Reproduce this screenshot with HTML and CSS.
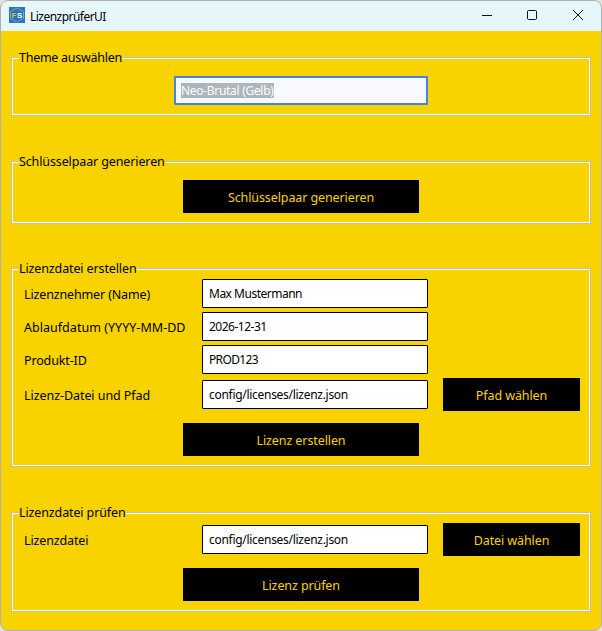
FILE: index.html
```html
<!DOCTYPE html>
<html lang="de">
<head>
<meta charset="utf-8">
<title>LizenzprüferUI</title>
<link rel="stylesheet" href="styles.css">
</head>
<body>
<div class="window">
  <header class="titlebar">
    <svg class="app-icon" width="16" height="16" viewBox="0 0 16 16">
      <rect width="16" height="16" fill="#2f74b5"/>
      <path d="M8 1 14.500 4.500V11.500L8 15 1.500 11.500V4.500Z" fill="none" stroke="#82afd6" stroke-width=".8"/>
      <text x="2.500" y="11" class="icon-f">F</text>
      <text x="8" y="11" class="icon-s">S</text>
    </svg>
    <span class="title">LizenzprüferUI</span>
    <svg class="caption" width="102" height="12" viewBox="0 0 102 12" fill="none" stroke="#111">
      <path d="M0 5.500H10"/>
      <rect x="45.500" y="0.500" width="9" height="9" rx="1"/>
      <path d="M91 0 101 10M101 0 91 10"/>
    </svg>
  </header>
  <main class="content">
    <section class="group theme">
      <h2 class="legend">Theme auswählen</h2>
      <div class="combo"><span class="selection">Neo-Brutal (Gelb)</span></div>
    </section>
    <section class="group keys">
      <h2 class="legend">Schlüsselpaar generieren</h2>
      <button class="btn main-btn">Schlüsselpaar generieren</button>
    </section>
    <section class="group create">
      <h2 class="legend">Lizenzdatei erstellen</h2>
      <div class="row"><label class="label">Lizenznehmer (Name)</label><div class="field name">Max Mustermann</div></div>
      <div class="row"><label class="label wide">Ablaufdatum (YYYY-MM-DD</label><div class="field name">2026-12-31</div></div>
      <div class="row"><label class="label">Produkt-ID</label><div class="field code">PROD123</div></div>
      <div class="row with-btn"><label class="label path">Lizenz-Datei und Pfad</label><div class="field">config/licenses/lizenz.json</div><button class="btn side-btn">Pfad wählen</button></div>
      <button class="btn main-btn">Lizenz erstellen</button>
    </section>
    <section class="group check">
      <h2 class="legend">Lizenzdatei prüfen</h2>
      <div class="row with-btn"><label class="label">Lizenzdatei</label><div class="field">config/licenses/lizenz.json</div><button class="btn side-btn">Datei wählen</button></div>
      <button class="btn main-btn">Lizenz prüfen</button>
    </section>
  </main>
</div>
</body>
</html>
```
FILE: styles.css
```css
* { box-sizing: border-box; }
body {
  margin: 0;
  background: #e4e4e2;
  font-family: "Noto Sans", sans-serif;
  font-size: 12.500px;
  color: #000;
}
.window {
  width: 602px;
  height: 631px;
  border: 1px solid #b0b0b0;
  border-radius: 8px;
  background: #f9d300;
  overflow: hidden;
}
.titlebar {
  display: flex;
  align-items: center;
  height: 30px;
  padding: 0 17px 0 8px;
  background: #e5f7fa;
}
.app-icon { margin-top: -2px; }
.title { margin-left: 5px; font-size: 12px; letter-spacing: -.53px; }
.caption { margin-left: auto; }
.icon-f, .icon-s { font: bold 8px "Liberation Sans", sans-serif; }
.icon-f { fill: #d9b84c; }
.icon-s { fill: #fff; }
.content { padding: 26px 10px 0; }
.group {
  border: 1px solid #bebebe;
  box-shadow: inset 0 0 0 1px #fff;
  display: flex;
  flex-direction: column;
  align-items: flex-start;
}
.theme { height: 59px; margin-bottom: 45px; }
.keys { height: 63px; margin-bottom: 44px; }
.create { height: 199px; margin-bottom: 45px; }
.check { height: 100px; }
.legend {
  margin: -10px 0 0 7px;
  height: 20px;
  line-height: 20px;
  font-size: 12.500px;
  font-weight: 400;
  letter-spacing: -.12px;
  background: #f9d300;
  white-space: nowrap;
}
.theme .legend { letter-spacing: -.27px; }
.combo {
  width: 254px;
  height: 29px;
  margin: 8px 0 0 162px;
  padding: 5px;
  border: 2px solid #4583ec;
  border-radius: 1px;
  background: #f8f9fc;
  font-size: 12px;
  line-height: 15px;
  letter-spacing: -.3px;
}
.selection { display: inline-block; height: 15px; background: #adb5bd; color: #fff; }
.row { display: flex; align-items: center; height: 29px; margin: 0 0 4px 12px; }
.with-btn { height: 33px; margin: 0 0 12px 12px; }
.create .with-btn { margin-top: 0; }
.label {
  width: 162px;
  margin-right: 16px;
  padding-top: 2px;
  line-height: 20px;
  letter-spacing: -.14px;
  overflow: hidden;
  white-space: nowrap;
}
.wide { letter-spacing: .03px; }
.path { letter-spacing: -.06px; }
.field {
  width: 226px;
  height: 29px;
  padding-left: 6px;
  border: 1px solid #000;
  border-radius: 1px;
  background: #fff;
  font-size: 12px;
  line-height: 27px;
  letter-spacing: -.29px;
  white-space: nowrap;
}
.name { letter-spacing: -.5px; }
.code { letter-spacing: -.65px; }
.btn {
  height: 33px;
  padding: 2px 0 0;
  border: 0;
  background: #000;
  color: #f9d300;
  font: 12.500px/31px "Noto Sans", sans-serif;
  letter-spacing: -.1px;
}
.main-btn { width: 236px; margin-left: 171px; }
.keys .main-btn { margin-top: 8px; }
.side-btn { width: 137px; margin-left: 15px; }
```
